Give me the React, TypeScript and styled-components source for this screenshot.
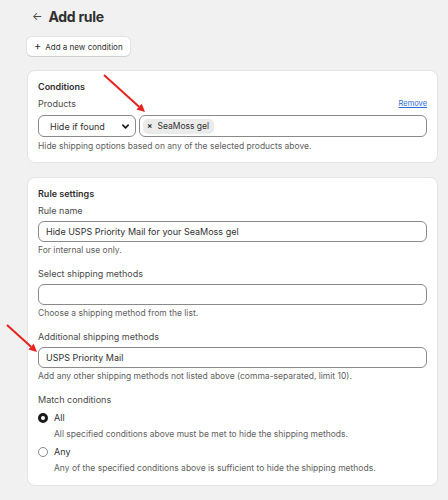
import * as React from "react";
import styled, { createGlobalStyle } from "styled-components";

const Global = createGlobalStyle`
  html, body {
    margin: 0;
    padding: 0;
    background: #f1f1f1;
    font-family: Inter, "Noto Sans", sans-serif;
    color: #303030;
  }
`;

const Page = styled.div`
  position: relative;
  width: 448px;
  height: 500px;
  box-sizing: border-box;
  padding: 6px 10px 0 27px;
  overflow: hidden;
`;

const TitleBar = styled.div`
  display: flex;
  align-items: center;
  gap: 6px;
  height: 20px;
  padding-left: 5px;
`;

const BackArrow = styled.span`
  font-size: 11px;
  color: #444;
  line-height: 1;
`;

const Title = styled.h1`
  margin: 0;
  font-size: 14px;
  font-weight: 700;
  color: #303030;
  letter-spacing: -0.3px;
`;

const AddButton = styled.button`
  display: inline-flex;
  align-items: center;
  gap: 4px;
  margin-top: 11px;
  height: 19px;
  padding: 0 7px 0 7px;
  background: #fff;
  border: none;
  border-radius: 5px;
  box-shadow: 0 1px 0 #cfcfcf, 0 0 0 1px #e3e3e3;
  font-family: inherit;
  font-size: 8px;
  color: #303030;
`;

const Plus = styled.span`
  font-size: 11px;
  line-height: 1;
`;

const Card = styled.section<{ $top: number; $bottom: number }>`
  margin-top: ${(p) => p.$top}px;
  background: #fff;
  border: 1px solid #e4e4e4;
  border-radius: 8px;
  padding: 9px 10px ${(p) => p.$bottom}px 10px;
`;

const CardTitle = styled.div`
  font-size: 9px;
  font-weight: 600;
  color: #303030;
  line-height: 14px;
`;

const LabelRow = styled.div<{ $top?: number }>`
  display: flex;
  justify-content: space-between;
  align-items: flex-end;
  margin-top: ${(p) => p.$top ?? 3}px;
  font-size: 9px;
  line-height: 14px;
  color: #4a4a4a;
`;

const RemoveLink = styled.a`
  font-size: 7.5px;
  color: #2a6ad9;
  text-decoration: underline;
`;

const FieldRow = styled.div<{ $top?: number }>`
  display: flex;
  gap: 3px;
  margin-top: ${(p) => p.$top ?? 3}px;
`;

const SelectBox = styled.div`
  display: flex;
  align-items: center;
  justify-content: space-between;
  width: 98px;
  height: 22px;
  box-sizing: border-box;
  padding: 0 5px 0 11px;
  border: 1px solid #8a8a8a;
  border-radius: 6px;
  font-size: 9px;
  color: #303030;
`;

const Input = styled.div<{ $tall?: boolean }>`
  flex: 1;
  display: flex;
  align-items: center;
  height: ${(p) => (p.$tall ? 22 : 21)}px;
  box-sizing: border-box;
  padding: 0 7px;
  border: 1px solid #8a8a8a;
  border-radius: 6px;
  font-size: 9px;
  color: #303030;
`;

const Chip = styled.span`
  display: inline-flex;
  align-items: center;
  gap: 5px;
  height: 15px;
  padding: 0 5px 0 4px;
  margin-left: -4px;
  background: #ebebeb;
  border-radius: 5px;
  font-size: 8.5px;
`;

const ChipX = styled.span`
  font-size: 8px;
  font-weight: 700;
`;

const Help = styled.div<{ $indent?: number; $top?: number }>`
  margin-top: ${(p) => p.$top ?? 2}px;
  padding-left: ${(p) => p.$indent ?? 0}px;
  font-size: 8.5px;
  line-height: 13px;
  color: #616161;
`;

const RadioRow = styled.div`
  display: flex;
  align-items: center;
  gap: 6px;
  margin-top: 4px;
  font-size: 9px;
  line-height: 14px;
  color: #303030;
`;

const Radio = styled.span<{ $checked?: boolean }>`
  width: 10px;
  height: 10px;
  box-sizing: border-box;
  border-radius: 50%;
  border: ${(p) => (p.$checked ? "3px solid #1a1a1a" : "1px solid #8a8a8a")};
  background: #fff;
`;

const Arrows = styled.svg`
  position: absolute;
  left: 0;
  top: 0;
  pointer-events: none;
`;

const Chevron = () => (
  <svg width="9" height="9" viewBox="0 0 10 10">
    <path d="M2 3.5 L5 6.5 L8 3.5" fill="none" stroke="#1a1a1a" strokeWidth="1.8" strokeLinecap="round" strokeLinejoin="round" />
  </svg>
);

const Arrow = ({ x1, y1, x2, y2 }: { x1: number; y1: number; x2: number; y2: number }) => {
  const a = Math.atan2(y2 - y1, x2 - x1);
  const len = 8;
  const w = 4;
  const bx = x2 - len * Math.cos(a);
  const by = y2 - len * Math.sin(a);
  const px = -Math.sin(a) * w;
  const py = Math.cos(a) * w;
  return (
    <g>
      <line x1={x1} y1={y1} x2={bx} y2={by} stroke="#e8231e" strokeWidth="2" />
      <polygon points={`${x2},${y2} ${bx + px},${by + py} ${bx - px},${by - py}`} fill="#e8231e" />
    </g>
  );
};

export default function App() {
  return (
    <>
      <Global />
      <Page>
        <TitleBar>
          <BackArrow>←</BackArrow>
          <Title>Add rule</Title>
        </TitleBar>
        <AddButton>
          <Plus>+</Plus> Add a new condition
        </AddButton>

        <Card $top={14} $bottom={9}>
          <CardTitle>Conditions</CardTitle>
          <LabelRow>
            <span>Products</span>
            <RemoveLink>Remove</RemoveLink>
          </LabelRow>
          <FieldRow $top={4}>
            <SelectBox>
              Hide if found <Chevron />
            </SelectBox>
            <Input $tall>
              <Chip>
                <ChipX>×</ChipX>SeaMoss gel
              </Chip>
            </Input>
          </FieldRow>
          <Help $top={3}>Hide shipping options based on any of the selected products above.</Help>
        </Card>

        <Card $top={14} $bottom={10}>
          <CardTitle>Rule settings</CardTitle>
          <LabelRow>Rule name</LabelRow>
          <FieldRow>
            <Input>Hide USPS Priority Mail for your SeaMoss gel</Input>
          </FieldRow>
          <Help>For internal use only.</Help>

          <LabelRow $top={10}>Select shipping methods</LabelRow>
          <FieldRow>
            <Input />
          </FieldRow>
          <Help>Choose a shipping method from the list.</Help>

          <LabelRow $top={10}>Additional shipping methods</LabelRow>
          <FieldRow>
            <Input>USPS Priority Mail</Input>
          </FieldRow>
          <Help>Add any other shipping methods not listed above (comma-separated, limit 10).</Help>

          <LabelRow $top={10}>Match conditions</LabelRow>
          <RadioRow>
            <Radio $checked />
            All
          </RadioRow>
          <Help $indent={16} $top={3}>All specified conditions above must be met to hide the shipping methods.</Help>
          <RadioRow>
            <Radio />
            Any
          </RadioRow>
          <Help $indent={16} $top={3}>Any of the specified conditions above is sufficient to hide the shipping methods.</Help>
        </Card>

        <Arrows width="448" height="500">
          <Arrow x1={104} y1={75} x2={145} y2={112} />
          <Arrow x1={7} y1={325} x2={37} y2={352} />
        </Arrows>
      </Page>
    </>
  );
}
